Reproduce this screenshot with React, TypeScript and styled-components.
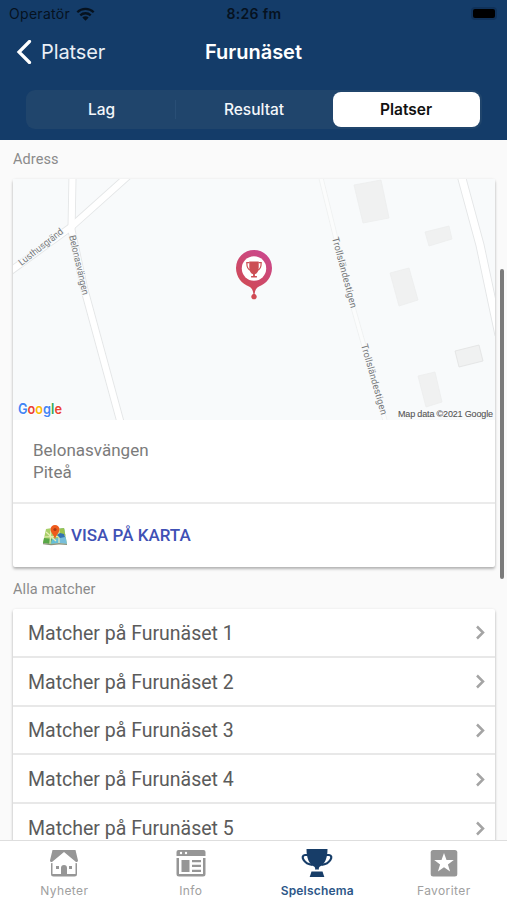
import React from "react";
import styled, { createGlobalStyle } from "styled-components";

const Global = createGlobalStyle`
  * { box-sizing: border-box; }
  body { margin: 0; background: #fafafa; overflow: hidden; }
  svg { display: block; flex: none; }
`;

const Screen = styled.div`
  position: relative;
  width: 507px;
  height: 900px;
  display: flex;
  flex-direction: column;
  overflow: hidden;
  background: #fafafa;
  font-family: Roboto, sans-serif;
`;

const Header = styled.header`
  flex: none;
  height: 140px;
  background: #143c69;
  font-family: Inter, sans-serif;
`;

const StatusBar = styled.div`
  height: 27px;
  padding: 0 8px 0 9px;
  display: grid;
  grid-template-columns: 1fr auto 1fr;
  align-items: center;
  color: #06121f;
`;

const Carrier = styled.div`
  display: flex;
  align-items: center;
  gap: 6px;
  font-size: 14px;
  letter-spacing: 0.3px;
`;

const Clock = styled.div`
  margin-right: -1px;
  margin-left: -1px;
  font-size: 14px;
  font-weight: 600;
  letter-spacing: 0.35px;
`;

const Battery = styled.div`
  justify-self: end;
  width: 22px;
  height: 9px;
  margin-right: 4px;
  border-radius: 2px;
  background: #000;
  box-shadow: 0 0 0 2px #10325a;
`;

const NavBar = styled.div`
  height: 50px;
  padding: 0 16px;
  display: grid;
  grid-template-columns: 1fr auto 1fr;
  align-items: center;
  color: #fff;
`;

const Back = styled.div`
  display: flex;
  align-items: center;
  gap: 9px;
  font-size: 20px;
  letter-spacing: -0.1px;
  color: #e9eff6;
`;

const Title = styled.h1`
  margin: 0;
  font-size: 20px;
  font-weight: 600;
  letter-spacing: -0.02px;
`;

const Segments = styled.div`
  margin: 13px 25px 0 26px;
  height: 39px;
  padding: 2px;
  display: grid;
  grid-template-columns: 148px 157px 147px;
  border-radius: 9px;
  background: #20456c;
`;

const Segment = styled.div<{ $active?: boolean; $divided?: boolean }>`
  position: relative;
  display: flex;
  align-items: center;
  justify-content: center;
  border-radius: 8px;
  padding-right: 1px;
  padding-bottom: 1px;
  font-size: 15.5px;
  font-weight: ${(p) => (p.$active ? 600 : 500)};
  color: ${(p) => (p.$active ? "#111" : "#f4f7fa")};
  background: ${(p) => (p.$active ? "#fff" : "transparent")};
  &::after {
    content: "";
    display: ${(p) => (p.$divided ? "block" : "none")};
    position: absolute;
    right: 0;
    top: 8px;
    bottom: 8px;
    width: 1px;
    background: #294e75;
  }
`;

const Content = styled.main`
  flex: 1;
  min-height: 0;
  overflow: hidden;
  padding: 0 12px 0 13px;
`;

const SectionLabel = styled.div`
  height: 39px;
  line-height: 39px;
  font-size: 14.5px;
  letter-spacing: 0.08px;
  color: #8b8b8b;
`;

const Card = styled.section`
  background: #fff;
  border-radius: 2px;
  box-shadow: 0 2px 3px rgba(0, 0, 0, 0.28), 0 0 3px rgba(0, 0, 0, 0.06);
`;

const AddressCard = styled(Card)`
  height: 388px;
  margin-bottom: 3px;
`;

const Address = styled.div`
  height: 84px;
  padding: 19px 20px 0;
  font-size: 17px;
  line-height: 22px;
  color: #7b7b7b;
  border-bottom: 2px solid #ebebeb;
`;

const MapLink = styled.div`
  height: 61px;
  padding-left: 30px;
  display: flex;
  align-items: center;
  gap: 4px;
  font-size: 17px;
  font-weight: 500;
  color: #3f51b5;
`;

const MatchRow = styled.div`
  height: 48.8px;
  padding: 2px 9px 0 15px;
  display: flex;
  align-items: center;
  justify-content: space-between;
  border-bottom: 2px solid #e8e8e8;
  font-size: 19.5px;
  color: #5b5b5b;
`;

const ScrollThumb = styled.div`
  position: absolute;
  right: 3px;
  top: 269px;
  width: 4px;
  height: 310px;
  border-radius: 2px;
  background: #7b7b7b;
`;

const TabBar = styled.nav`
  position: relative;
  flex: none;
  height: 60px;
  padding-left: 1px;
  display: grid;
  grid-template-columns: repeat(4, 1fr);
  background: #fff;
  border-top: 1px solid #dedede;
`;

const Tab = styled.div<{ $active?: boolean }>`
  display: flex;
  flex-direction: column;
  align-items: center;
  padding-top: 5px;
  gap: 3px;
  font-family: Inter, sans-serif;
  font-size: 12px;
  line-height: 16px;
  letter-spacing: ${(p) => (p.$active ? "0.2px" : "0.4px")};
  font-weight: ${(p) => (p.$active ? 600 : 400)};
  color: ${(p) => (p.$active ? "#2d5788" : "#a0a0a0")};
`;

const WifiIcon = () => (
  <svg width="19" height="14" viewBox="0 0 19 14" fill="none" stroke="#06121f" strokeWidth="2.3">
    <path d="M1.3 5.2a11.7 11.7 0 0 1 16.4 0M4.3 8.4a7.4 7.4 0 0 1 10.4 0" />
    <path d="M6.3 10.5a4.6 4.6 0 0 1 6.4 0L9.5 13.7Z" fill="#06121f" stroke="none" />
  </svg>
);

const BackIcon = () => (
  <svg width="16" height="24" viewBox="0 0 16 24" fill="none" stroke="#fff" strokeWidth="3.2">
    <path d="M13.5 1.5 3 12l10.5 10.5" strokeLinecap="round" strokeLinejoin="miter" />
  </svg>
);

const ChevronIcon = () => (
  <svg width="11" height="16" viewBox="0 0 11 16" fill="none" stroke="#a4a4a4" strokeWidth="2.5">
    <path d="m2 1.5 6 6-6 6" />
  </svg>
);

const PlaceMap = () => (
  <svg width="482" height="241" viewBox="13 179 482 241" fontFamily="Roboto, sans-serif">
    <defs>
      <linearGradient id="pin" x1="0.8" y1="0" x2="0.3" y2="1">
        <stop offset="0" stopColor="#cb478e" />
        <stop offset="1" stopColor="#d04b4b" />
      </linearGradient>
    </defs>
    <rect x="13" y="179" width="482" height="241" fill="#f8fafb" />
    <g fill="none" stroke="#e4e6e7">
      <path d="M72.500 177 71.500 230 84 288 121 424" strokeWidth="8" />
      <path d="M5 275 71 227 128 176" strokeWidth="8" />
      <path d="M461 175 480 245 499 335" strokeWidth="9" />
      <path d="M321 178 351 300 386 424" strokeWidth="5" stroke="#eff1f1" />
    </g>
    <g fill="none" stroke="#fff">
      <path d="M72.500 177 71.500 230 84 288 121 424" strokeWidth="6.200" />
      <path d="M5 275 71 227 128 176" strokeWidth="6.200" />
      <path d="M461 175 480 245 499 335" strokeWidth="7.200" />
      <path d="M321 178 351 300 386 424" strokeWidth="3.400" stroke="#fbfcfc" />
    </g>
    <g fill="#f0f1f1" stroke="#eceded" strokeWidth="0.8">
      <path d="m354 185 27-5 8 38-26 5Z" />
      <path d="m425 232 24-6 3 13-23 7Z" />
      <path d="m390 273 19-5 9 32-19 6Z" />
      <path d="m455 351 24-6 4 16-24 6Z" stroke="#e1e2e2" />
      <path d="m418 376 17-4 7 30-16 5Z" />
    </g>
    <g fill="#76787a" stroke="#f8fafb" strokeWidth="2" paintOrder="stroke" fontSize="9.5">
      <text transform="translate(21.5 266) rotate(-38)" textLength="54">Lusthusgränd</text>
      <text transform="translate(69 236) rotate(77)" textLength="61">Belonasvängen</text>
      <text transform="translate(332 238) rotate(75)" textLength="73">Trollsländestigen</text>
      <text transform="translate(361 345) rotate(74)" textLength="73">Trollsländestigen</text>
    </g>
    <path d="M254 250a18 18 0 0 0-18 18c0 9 6 16 13 18.500 3 1.500 4 4 4.400 7.500a2.700 2.700 0 1 0 1.200 0c.4-3.500 1.400-6 4.400-7.500 7-2.500 13-9.500 13-18.500a18 18 0 0 0-18-18Z" fill="url(#pin)" />
    <circle cx="254" cy="268.500" r="12.200" fill="#fff" />
    <g fill="#cc4e54">
      <path d="M249.300 261.500h9.400v6c0 3.800-1.500 6-3.800 6.700v1.800h2v1.500h-5.800V276h2v-1.800c-2.300-.7-3.800-2.900-3.800-6.700Z" />
      <path d="M249.500 262.700h-2.700c0 5 1.200 7 4 7.700M258.500 262.700h2.700c0 5-1.200 7-4 7.700" fill="none" stroke="#cc4e54" strokeWidth="1.200" />
    </g>
    <text x="18" y="414" fontFamily="Inter, sans-serif" fontSize="13.800" fontWeight="600" textLength="44" lengthAdjust="spacingAndGlyphs" stroke="#fff" strokeWidth="1.500" paintOrder="stroke">
      <tspan fill="#4285f4">G</tspan><tspan fill="#ea4335">o</tspan><tspan fill="#fbbc05">o</tspan><tspan fill="#4285f4">g</tspan><tspan fill="#34a853">l</tspan><tspan fill="#ea4335">e</tspan>
    </text>
    <text x="398" y="416.500" fontFamily="Liberation Sans, sans-serif" fontSize="9" textLength="95" fill="#555" stroke="#555" strokeWidth="0.100">Map data ©2021 Google</text>
  </svg>
);

const WorldMapIcon = () => (
  <svg width="24" height="22" viewBox="0 0 24 22">
    <path d="m3 5 6-1 6 1 6-1 3 16-8-1-8 1-8-1Z" fill="#a8cf68" />
    <path d="m15 5 6-1 3 16-8-1Z" fill="#77bedb" />
    <path d="m15 5 6-1 1.400 8L16 12Z" fill="#9bc44d" />
    <path d="m0 19 1-5 8 1-1 5Z" fill="#58a747" />
    <path d="m9 15 7-1v5l-8 1Z" fill="#65bed9" />
    <path d="m1 13 22-1M8 4 7 20M16 5v14M3 8l10 9" stroke="#e8edb9" strokeWidth="1.200" fill="none" />
    <path d="m14 11 3-2 4 1 1 3-5 1Z" fill="#3373b3" />
    <path d="m0 19 8 1 8-1 8 1v1l-8-.6-8 .8-8-1Z" fill="#8b937d" />
    <path d="M12 1a4.500 4.500 0 0 0-4.500 4.500c0 3 3.200 5 4.500 9.500 1.300-4.500 4.500-6.500 4.500-9.500A4.500 4.500 0 0 0 12 1Z" fill="#ef5b1d" />
    <circle cx="12" cy="5.500" r="1.600" fill="#a93c16" />
  </svg>
);

const HomeIcon = () => (
  <svg width="30" height="34" viewBox="0 0 30 34">
    <path d="M3.500 4h23l2.500 10.500c0 1-1 1.500-2 1.500L15 6 3 16c-1.200 0-2-.5-2-1.500Z" fill="#969696" />
    <path d="M15 8 3.500 17v11q0 2 2 2H12v-7a3 3 0 0 1 6 0v7h6.500q2 0 2-2V17Z" fill="#fff" />
    <path d="M2 17.300 3.500 17v11H12v-6q0-3 3-3t3 3v6h8.500V17l1.500.3V28q0 2.500-2.500 2.500h-21Q2 30.500 2 28Z" fill="#969696" />
    <path d="M13 30v-6.500q0-2.500 2-2.500t2 2.500V30Z" fill="#969696" />
    <rect x="7" y="20" width="3" height="3" fill="#969696" />
    <rect x="20" y="20" width="3" height="3" fill="#969696" />
  </svg>
);

const InfoIcon = () => (
  <svg width="30" height="34" viewBox="0 0 30 34" fill="#969696">
    <path d="M2.500 4h25q2 0 2 2v4H.5V6q0-2 2-2Z" />
    <circle cx="5" cy="7" r="1.200" fill="#fff" />
    <circle cx="10" cy="7" r="1.200" fill="#fff" />
    <path d="M.5 12h2.500v16h24V12h2.500v16q0 2.500-2.500 2.500h-24Q.5 30.500.5 28Z" />
    <path d="M5.500 14h8v12h-8ZM16 14h9v2.300h-9ZM16 18.800h9v2.300h-9ZM16 23.700h9V26h-9Z" />
  </svg>
);

const TrophyIcon = () => (
  <svg width="32" height="34" viewBox="0 0 32 34" fill="#173d68">
    <path d="M5.500 3h21c0 9-2.500 15-7.500 17.500-1 .7-1.500 2-1 3h-4c.5-1 0-2.300-1-3C8 18 5.500 12 5.500 3Z" />
    <path d="M7 9H4C-1 9.500 2.500 18 11.500 19M25 9h3c5 .5 1.500 9-7.500 10" fill="none" stroke="#173d68" strokeWidth="2.200" />
    <path d="M10.500 25.500h11l1.800 5.500H8.700Z" />
  </svg>
);

const FavoriteIcon = () => (
  <svg width="30" height="34" viewBox="0 0 30 34">
    <rect x="1.700" y="4" width="26.600" height="26.500" rx="2.500" fill="#969696" />
    <path d="m15 7 2.500 7h7.300l-5.900 4.400 2.200 7L15 21.200l-6.100 4.200 2.200-7L5.200 14h7.300Z" fill="#fff" />
  </svg>
);

const tabs = [
  { label: "Nyheter", Icon: HomeIcon },
  { label: "Info", Icon: InfoIcon },
  { label: "Spelschema", Icon: TrophyIcon, active: true },
  { label: "Favoriter", Icon: FavoriteIcon },
];

export default function App() {
  return (
    <>
      <Global />
      <Screen>
        <Header>
          <StatusBar>
            <Carrier>Operatör <WifiIcon /></Carrier>
            <Clock>8:26 fm</Clock>
            <Battery />
          </StatusBar>
          <NavBar>
            <Back><BackIcon />Platser</Back>
            <Title>Furunäset</Title>
          </NavBar>
          <Segments>
            <Segment $divided>Lag</Segment>
            <Segment>Resultat</Segment>
            <Segment $active>Platser</Segment>
          </Segments>
        </Header>
        <Content>
          <SectionLabel>Adress</SectionLabel>
          <AddressCard>
            <PlaceMap />
            <Address>Belonasvängen<br />Piteå</Address>
            <MapLink><WorldMapIcon />VISA PÅ KARTA</MapLink>
          </AddressCard>
          <SectionLabel>Alla matcher</SectionLabel>
          <Card>
            {[1, 2, 3, 4, 5].map((n) => (
              <MatchRow key={n}>Matcher på Furunäset {n}<ChevronIcon /></MatchRow>
            ))}
          </Card>
        </Content>
        <TabBar>
          {tabs.map(({ label, Icon, active }) => (
            <Tab key={label} $active={active}><Icon />{label}</Tab>
          ))}
        </TabBar>
        <ScrollThumb />
      </Screen>
    </>
  );
}
